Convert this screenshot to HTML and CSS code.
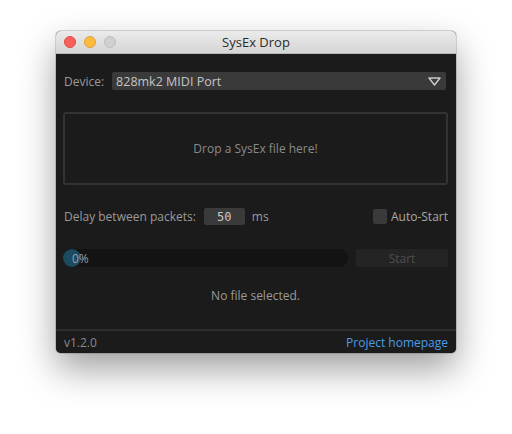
FILE: index.html
```html
<!DOCTYPE html>
<html>
<head>
<meta charset="utf-8">
<link rel="stylesheet" href="styles.css">
</head>
<body>
<div class="window">
  <div class="titlebar">
    <div class="lights">
      <span class="light red"></span>
      <span class="light yellow"></span>
      <span class="light grey"></span>
    </div>
    <div class="title">SysEx Drop</div>
  </div>
  <div class="content">
    <div class="device-row">
      <span class="label">Device:</span>
      <div class="select">
        <span>828mk2 MIDI Port</span>
        <svg class="arrow" width="13" height="9" viewBox="0 0 13 9"><path d="M1 1 H12 L6.5 8 Z" fill="none" stroke="#c8c8c8" stroke-width="1.5" stroke-linejoin="round"/></svg>
      </div>
    </div>
    <div class="dropzone">Drop a SysEx file here!</div>
    <div class="delay-row">
      <span class="label">Delay between packets:</span>
      <span class="num">50</span>
      <span class="label ms">ms</span>
      <span class="spacer"></span>
      <span class="check"></span>
      <span class="label auto">Auto-Start</span>
    </div>
    <div class="progress-row">
      <div class="progress">
        <span class="knob"></span>
        <span class="pct">0%</span>
      </div>
      <div class="start">Start</div>
    </div>
    <div class="status">No file selected.</div>
  </div>
  <div class="footer">
    <span class="version">v1.2.0</span>
    <span class="link">Project homepage</span>
  </div>
</div>
</body>
</html>
```
FILE: styles.css
```css
html, body {
  margin: 0;
  padding: 0;
  background: #ffffff;
}
body {
  font-family: "Open Sans", "Noto Sans", sans-serif;
  font-size: 12px;
  height: 434px;
}
.window {
  margin: 31px 0 0 56px;
  width: 400px;
  height: 322px;
  border-radius: 5px;
  overflow: hidden;
  background: #1b1b1b;
  box-shadow: 0 16px 36px rgba(0,0,0,0.38), 0 0 0 1px rgba(0,0,0,0.14);
  display: flex;
  flex-direction: column;
}
.titlebar {
  height: 23px;
  background: linear-gradient(#ebebeb, #d5d5d5);
  border-bottom: 1px solid #b8b8b8;
  box-sizing: border-box;
  position: relative;
  display: flex;
  align-items: center;
  justify-content: center;
}
.lights {
  position: absolute;
  left: 8px;
  top: 5px;
  display: flex;
  gap: 8px;
}
.light {
  width: 12px;
  height: 12px;
  border-radius: 50%;
  box-sizing: border-box;
}
.red { background: #fc605c; border: 1px solid #de4943; }
.yellow { background: #fdbc40; border: 1px solid #dea236; }
.grey { background: #d0d0d0; border: 1px solid #bdbdbd; }
.title {
  font-size: 13px;
  color: #2b2b2b;
}
.content {
  flex: 1;
  padding: 18px 8px 0 7px;
  display: flex;
  flex-direction: column;
  color: #9a9a9a;
}
.label { color: #9a9a9a; }
.device-row {
  display: flex;
  align-items: center;
  height: 18px;
  padding-left: 1px;
  padding-right: 2px;
}
.device-row .label { margin-right: 8px; }
.select {
  flex: 1;
  height: 18px;
  background: #3a3a3a;
  border-radius: 2px;
  color: #c4c4c4;
  display: flex;
  align-items: center;
  justify-content: space-between;
  padding: 0 5px 0 4px;
  font-size: 12.5px;
}
.arrow { display: block; }
.dropzone {
  margin-top: 22px;
  height: 73px;
  box-sizing: border-box;
  border: 2px solid #333333;
  border-radius: 3px;
  display: flex;
  align-items: center;
  justify-content: center;
  color: #8a8a8a;
}
.delay-row {
  margin-top: 23px;
  height: 17px;
  display: flex;
  align-items: center;
  padding-left: 1px;
}
.num {
  margin-left: 8px;
  width: 41px;
  height: 17px;
  background: #3a3a3a;
  border-radius: 2px;
  color: #c8c8c8;
  font-family: "DejaVu Sans Mono", monospace;
  font-size: 12px;
  display: flex;
  align-items: center;
  justify-content: center;
}
.ms { margin-left: 7px; }
.spacer { flex: 1; }
.check {
  width: 14px;
  height: 15px;
  background: #3a3a3a;
  border-radius: 2px;
  margin-right: 4px;
}
.auto { color: #a8a8a8; }
.progress-row {
  margin-top: 24px;
  height: 18px;
  display: flex;
  gap: 8px;
}
.progress {
  flex: 0 0 285px;
  height: 18px;
  background: #131313;
  border-radius: 9px;
  position: relative;
  display: flex;
  align-items: center;
}
.knob {
  position: absolute;
  left: 0;
  top: 0;
  width: 18px;
  height: 18px;
  border-radius: 50%;
  background: #1c4a60;
}
.pct {
  position: relative;
  margin-left: 9px;
  color: #8fa2ad;
}
.start {
  flex: 1;
  background: #242424;
  border-radius: 1px;
  color: #4e4e4e;
  display: flex;
  align-items: center;
  justify-content: center;
}
.status {
  margin-top: 20px;
  text-align: center;
  color: #9a9a9a;
}
.footer {
  height: 22px;
  border-top: 2px solid #2e2e2e;
  display: flex;
  align-items: center;
  justify-content: space-between;
  padding: 0 8px;
  background: #1b1b1b;
}
.version { color: #8a8a8a; }
.link { color: #4a9be8; }
```
